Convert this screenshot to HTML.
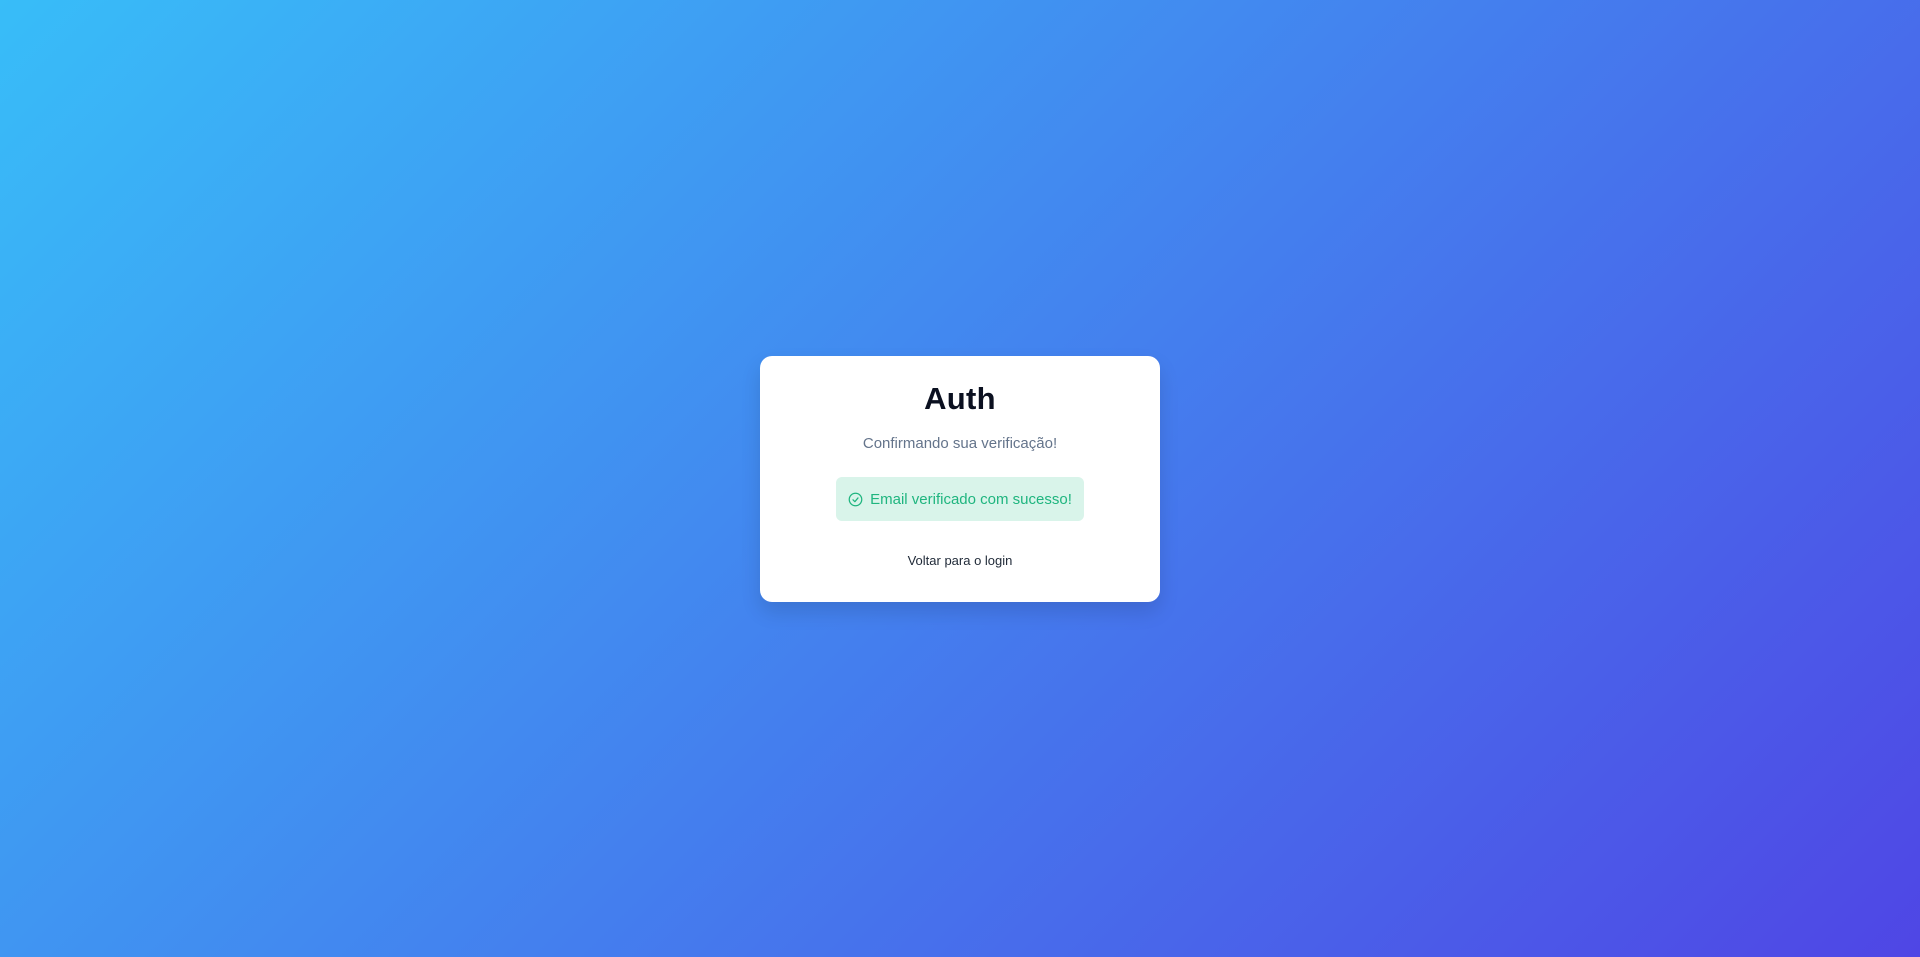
<!DOCTYPE html>
<html><head><meta charset="utf-8"><style>
html,body{margin:0;height:957px;width:1920px;overflow:hidden}
body{background:linear-gradient(135deg,#38bdf8 0%,#4f46e5 100%);font-family:"Liberation Sans",sans-serif;position:relative}
.card{position:absolute;left:760px;top:356px;width:400px;height:246px;background:#fff;border-radius:12px;box-shadow:0 10px 20px rgba(0,0,0,.12);text-align:center}
h1{margin:0;position:absolute;top:25px;left:0;right:0;font-size:31px;font-weight:bold;color:#0b1020;letter-spacing:.3px}
.sub{position:absolute;top:79px;left:0;right:0;font-size:15px;color:#64748b}
.alert{position:absolute;left:76px;top:121px;width:248px;height:44px;background:#d9f4ea;border-radius:6px;color:#1fb57f;font-size:15px;display:flex;align-items:center;justify-content:center;gap:7px}
.link{position:absolute;top:197px;left:0;right:0;font-size:13px;color:#1f2937}
</style></head><body>
<div class="card">
<h1>Auth</h1>
<div class="sub">Confirmando sua verificação!</div>
<div class="alert"><svg width="15" height="15" viewBox="0 0 24 24" fill="none" stroke="#1fb57f" stroke-width="2" stroke-linecap="round" stroke-linejoin="round"><circle cx="12" cy="12" r="10"/><path d="M8 12.5l3 3 5-6"/></svg>Email verificado com sucesso!</div>
<div class="link">Voltar para o login</div>
</div>
</body></html>
